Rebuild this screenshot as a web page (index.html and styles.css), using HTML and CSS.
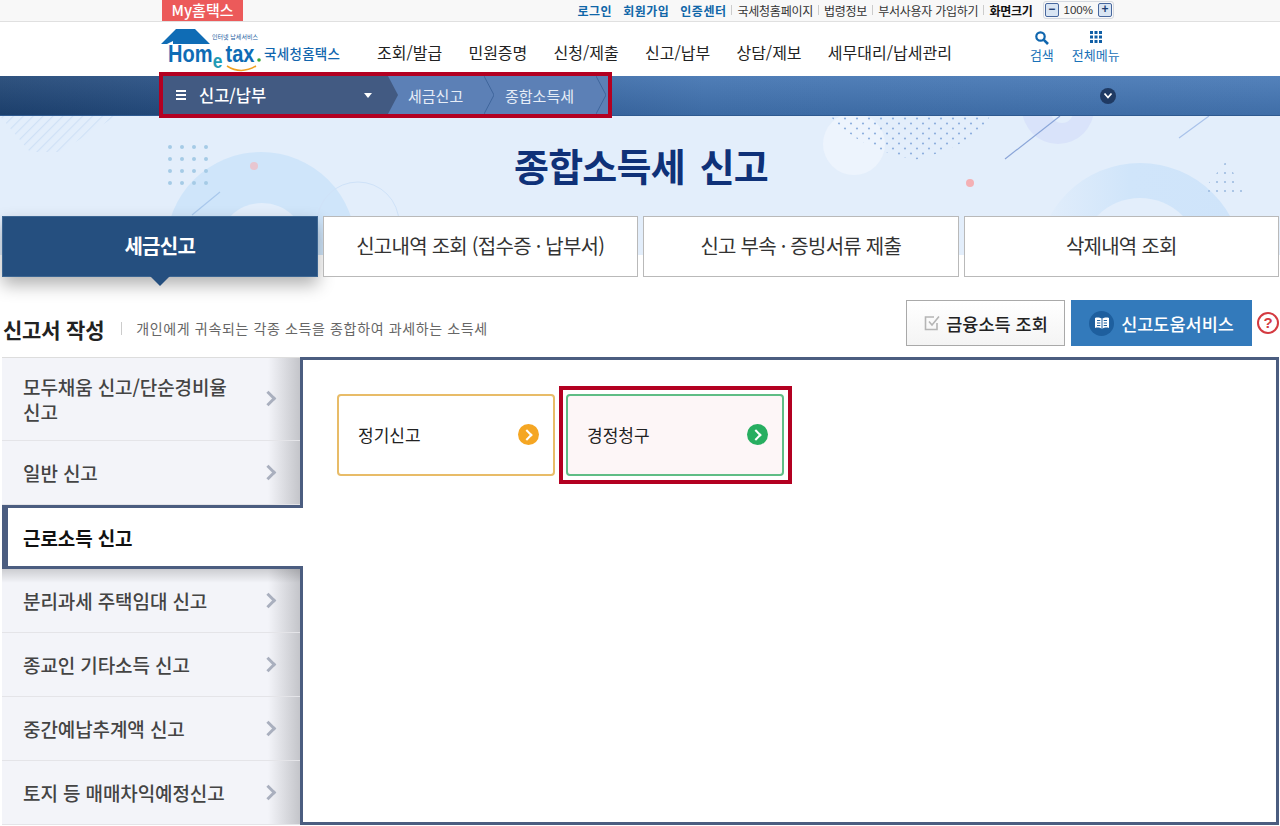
FILE: index.html
```html
<!DOCTYPE html>
<html lang="ko">
<head>
    <meta charset="UTF-8">
    <title>종합소득세 신고</title>
    <link rel="stylesheet" href="styles.css">
</head>
<body>
    <!-- top utility bar -->
    <div class="topbar">
        <a class="my-tab">My홈택스</a>
        <div class="top-links">
            <a class="strong">로그인</a>
            <a class="strong">회원가입</a>
            <a class="strong">인증센터</a>
            <i class="sep"></i>
            <a>국세청홈페이지</a>
            <i class="sep"></i>
            <a>법령정보</a>
            <i class="sep"></i>
            <a>부서사용자 가입하기</a>
            <i class="sep"></i>
            <a class="dark">화면크기</a>
            <div class="zoom-ctl">
                <span class="zoom-btn">−</span>
                <span class="zoom-val">100%</span>
                <span class="zoom-btn">+</span>
            </div>
        </div>
    </div>

    <!-- logo and main menu -->
    <header class="header">
        <svg class="logo" viewBox="160 24 182 50" width="182" height="50">
            <path d="M161 44 L176 29 H195 L210 44 H173 V41 L167 44 Z" fill="#0f6cb5"/>
            <text x="212" y="39.4" font-size="6" fill="#1b5ea0" font-family="Noto Sans CJK KR" textLength="46">인터넷 납세서비스</text>
            <text transform="translate(168 62) scale(.87 1)" font-size="23" font-weight="700" fill="#0f6cb5" font-family="Liberation Sans">Hom<tspan font-size="20" fill="#1f9bb5" dx="0.5" dy="6">e</tspan><tspan dx="3.4" dy="-6">tax</tspan></text>
            <circle cx="259" cy="60" r="1.8" fill="#3aa63a"/>
            <path d="M227 66 Q241 75 256 66" fill="none" stroke="#f0a020" stroke-width="1.5"/>
            <text x="264" y="59" font-size="13.5" font-weight="500" fill="#1266ae" font-family="Noto Sans CJK KR" textLength="76">국세청홈택스</text>
        </svg>
        <nav class="gnb">
            <a>조회/발급</a>
            <a>민원증명</a>
            <a>신청/제출</a>
            <a>신고/납부</a>
            <a>상담/제보</a>
            <a>세무대리/납세관리</a>
        </nav>
        <div class="head-tools">
            <a class="tool">
                <svg width="16" height="16" viewBox="0 0 16 16"><circle cx="6.5" cy="6.5" r="4.2" fill="none" stroke="#0f66ae" stroke-width="2.2"/><path d="M9.8 9.8 L14 14" stroke="#0f66ae" stroke-width="2.6"/></svg>
                <span>검색</span>
            </a>
            <a class="tool">
                <svg width="16" height="16" viewBox="0 0 16 16" fill="#0f5ea5"><rect x="2" y="1" width="3" height="3"/><rect x="6.5" y="1" width="3" height="3"/><rect x="11" y="1" width="3" height="3"/><rect x="2" y="5.5" width="3" height="3"/><rect x="6.5" y="5.5" width="3" height="3"/><rect x="11" y="5.5" width="3" height="3"/><rect x="2" y="10" width="3" height="3"/><rect x="6.5" y="10" width="3" height="3"/><rect x="11" y="10" width="3" height="3"/></svg>
                <span>전체메뉴</span>
            </a>
        </div>
    </header>

    <!-- breadcrumb bar -->
    <div class="crumbbar">
        <div class="crumbs">
            <div class="crumb-home">
                <span class="burger"><i></i><i></i><i></i></span>
                <span class="crumb-title">신고/납부</span>
                <span class="caret"></span>
            </div>
            <div class="crumb crumb-first">세금신고<svg class="chev" viewBox="0 0 10 38"><polyline points="0,0 10,19 0,38"/></svg></div>
            <div class="crumb">종합소득세<svg class="chev" viewBox="0 0 10 38"><polyline points="0,0 10,19 0,38"/></svg></div>
        </div>
        <span class="bar-toggle">
            <svg width="10" height="8" viewBox="0 0 10 8"><polyline points="1.5,1.5 5,5.5 8.5,1.5" fill="none" stroke="#fff" stroke-width="1.8"/></svg>
        </span>
    </div>

    <!-- hero with title and tabs -->
    <div class="visual">
        <svg class="visual-bg" viewBox="0 116 1280 139" width="1280" height="139">
            <defs>
                <pattern id="stripe" width="7" height="7" patternUnits="userSpaceOnUse" patternTransform="rotate(45)">
                    <rect width="1.2" height="7" fill="#cfe1f6"/>
                </pattern>
                <pattern id="dotgrid" width="12" height="10" patternUnits="userSpaceOnUse" x="830" y="116">
                    <circle cx="3" cy="2.5" r="1.1" fill="#8fb0de"/>
                    <circle cx="9" cy="7.5" r="1.1" fill="#8fb0de"/>
                </pattern>
                <pattern id="dotbig" width="12" height="12" patternUnits="userSpaceOnUse" x="164" y="141">
                    <circle cx="6" cy="6" r="2" fill="#a5cbe6"/>
                </pattern>
                <pattern id="dotsmall" width="8" height="9" patternUnits="userSpaceOnUse" x="1197" y="160">
                    <circle cx="4" cy="4" r="1.1" fill="#9dbbe0"/>
                </pattern>
                <linearGradient id="arcfade" x1="0" x2="1" y1="0" y2="0">
                    <stop offset="0" stop-color="#e3eefb"/>
                    <stop offset=".45" stop-color="#d0e5fa"/>
                    <stop offset="1" stop-color="#cfe4fa"/>
                </linearGradient>
            </defs>
            <path d="M0 116 H116 L60 152 H30 Z" fill="url(#stripe)"/>
            <circle cx="261" cy="247" r="95" fill="#cfe5fa"/>
            <circle cx="262" cy="247" r="44" fill="#e3eefb"/>
            <circle cx="358" cy="223" r="41" fill="none" stroke="#cfe2f8" stroke-width="1"/>
            <rect x="164" y="141" width="48" height="48" fill="url(#dotbig)"/>
            <circle cx="254" cy="166" r="4" fill="#e8c6d0"/>
            <line x1="192" y1="215" x2="220" y2="192" stroke="#a9c8ec" stroke-width="1.2"/>
            <circle cx="854" cy="144" r="31" fill="#edf4fd"/>
            <path d="M830 116 H990 Q975 145 915 160 Q860 150 830 116 Z" fill="url(#dotgrid)"/>
            <circle cx="1058" cy="108" r="36" fill="#d9e3fa"/>
            <circle cx="1062" cy="112" r="11" fill="#e3eefb"/>
            <line x1="1005" y1="159" x2="1060" y2="116" stroke="#8aa5d8" stroke-width="1.2"/>
            <line x1="1179" y1="138" x2="1209" y2="116" stroke="#a9c2ea" stroke-width="1.2"/>
            <circle cx="970" cy="183" r="4" fill="#f4b0b4"/>
            <circle cx="1140" cy="266" r="103" fill="url(#arcfade)"/>
            <circle cx="1140" cy="258" r="60" fill="#e3eefb"/>
            <path d="M1227 160 L1197 198 H1246 Z" fill="url(#dotsmall)"/>
        </svg>
        <h1 class="page-title">종합소득세 신고</h1>
        <div class="tabs">
            <a class="tab active">세금신고</a>
            <a class="tab">신고내역 조회 (접수증 · 납부서)</a>
            <a class="tab">신고 부속 · 증빙서류 제출</a>
            <a class="tab">삭제내역 조회</a>
        </div>
    </div>

    <!-- section heading -->
    <div class="sec-head">
        <h2>신고서 작성</h2>
        <span class="sec-desc">개인에게 귀속되는 각종 소득을 종합하여 과세하는 소득세</span>
        <div class="sec-btns">
            <a class="btn btn-line">
                <svg width="18" height="18" viewBox="0 0 18 18"><path d="M14 9 V15.5 H2.5 V3 H11" fill="none" stroke="#b5b5b5" stroke-width="1.6"/><path d="M6 7.5 L9 11 L16 2.5" fill="none" stroke="#b5b5b5" stroke-width="1.6"/></svg>
                금융소득 조회
            </a>
            <a class="btn btn-blue">
                <span class="book">
                    <svg width="16" height="14" viewBox="0 0 16 14"><path d="M8 3 C6 1.5 3 1.2 1 2 V12 C3 11.2 6 11.5 8 13 C10 11.5 13 11.2 15 12 V2 C13 1.2 10 1.5 8 3 Z" fill="#fff"/><path d="M8 3 V13 M3 4.5 H6.3 M3 7 H6.3 M3 9.5 H6.3 M9.7 4.5 H13 M9.7 7 H13 M9.7 9.5 H13" stroke="#1e5f9e" stroke-width="1" fill="none"/></svg>
                </span>
                신고도움서비스
            </a>
            <a class="help">?</a>
        </div>
    </div>

    <!-- side menu and cards -->
    <div class="work">
        <ul class="side">
            <li class="side-item tall"><span>모두채움 신고/단순경비율<br>신고</span></li>
            <li class="side-item"><span>일반 신고</span></li>
            <li class="side-item on"><span>근로소득 신고</span></li>
            <li class="side-item after-on"><span>분리과세 주택임대 신고</span></li>
            <li class="side-item"><span>종교인 기타소득 신고</span></li>
            <li class="side-item"><span>중간예납추계액 신고</span></li>
            <li class="side-item"><span>토지 등 매매차익예정신고</span></li>
        </ul>
        <div class="panel">
            <a class="card card-orange">정기신고<span class="go"></span></a>
            <a class="card card-green">경정청구<span class="go"></span></a>
        </div>
    </div>
</body>
</html>
```

FILE: styles.css
```css
* {
    box-sizing: border-box;
}
html, body {
    height: 826px;
    overflow: hidden;
}
body {
    margin: 0;
    background: #fff;
    color: #222;
    font-family: "Noto Sans CJK KR", "Noto Sans", sans-serif;
}
a {
    color: inherit;
    text-decoration: none;
}

/* top bar */
.topbar {
    display: flex;
    justify-content: space-between;
    height: 22px;
    padding: 0 166px 0 162px;
    background: #f8f8f8;
    border-bottom: 1px solid #e0e0e0;
}
.my-tab {
    width: 81px;
    height: 21px;
    background: #ec5a5a;
    color: #fff;
    font-size: 15px;
    font-weight: 500;
    line-height: 19px;
    text-align: center;
}
.top-links {
    display: flex;
    align-items: center;
    height: 20px;
    font-size: 12px;
    color: #333;
    letter-spacing: -0.25px;
}
.top-links a {
    margin-right: 11px;
    white-space: pre;
}
.top-links .strong {
    color: #0f66a8;
    font-weight: 700;
    font-size: 12px;
    letter-spacing: 0.5px;
}
.top-links .dark {
    color: #111;
    font-weight: 700;
    margin-right: 10px;
}
.sep {
    width: 1px;
    height: 10px;
    margin-right: 5px;
    margin-left: -6px;
    background: #ccc;
}
.zoom-ctl {
    display: flex;
    align-items: center;
    gap: 5px;
    height: 18px;
    padding: 0 1px;
    border: 1px solid #d5d9e0;
    border-radius: 3px;
    font-size: 11px;
}
.zoom-val {
    font-family: "Liberation Sans", sans-serif;
    font-size: 11.5px;
    letter-spacing: 0;
}
.zoom-btn {
    width: 14px;
    height: 14px;
    border: 1px solid #47679e;
    border-radius: 2px;
    background: #d9e5f3;
    color: #1d3f73;
    font: 700 12px/11px "Liberation Sans", sans-serif;
    text-align: center;
}

/* header */
.header {
    display: flex;
    align-items: flex-start;
    height: 54px;
    padding-left: 160px;
    background: #fff;
}
.logo {
    flex: none;
    margin-top: 2px;
}
.gnb {
    display: flex;
    gap: 26.25px;
    margin-left: 35px;
    font-size: 16px;
    line-height: 60px;
    color: #222;
    white-space: nowrap;
}
.head-tools {
    display: flex;
    gap: 18px;
    margin-left: 78px;
    padding-top: 8px;
}
.tool {
    display: flex;
    flex-direction: column;
    align-items: center;
    color: #1a72b8;
    font-size: 13px;
    line-height: 18px;
}

/* breadcrumb bar */
.crumbbar {
    position: relative;
    z-index: 2;
    display: flex;
    height: 40px;
    padding-left: 163px;
    background:
        linear-gradient(180deg, rgba(255, 255, 255, 0.08), rgba(0, 0, 0, 0.08)),
        linear-gradient(90deg, #1e4474 0, #2f5a94 30%, #4173b1 55%, #4577b5 100%);
    border-bottom: 1px solid #2f5a90;
}
.crumbs {
    display: flex;
    width: 445px;
    height: 38px;
    background: #5c80b6;
    outline: 4px solid #b30021;
}
.crumb-home {
    display: flex;
    align-items: center;
    width: 235px;
    padding: 0 26px 0 13px;
    background: #425a82;
    color: #fff;
    clip-path: polygon(0 0, calc(100% - 10px) 0, 100% 50%, calc(100% - 10px) 100%, 0 100%);
}
.burger {
    display: flex;
    flex-direction: column;
    gap: 2px;
    width: 10px;
    margin-right: 13px;
}
.burger i {
    height: 2px;
    background: #fff;
}
.crumb-title {
    flex: 1;
    font-size: 16.5px;
    font-weight: 500;
}
.caret {
    width: 0;
    height: 0;
    border: 4px solid transparent;
    border-top: 5px solid #fff;
    border-bottom: 0;
}
.crumb {
    position: relative;
    display: flex;
    align-items: center;
    width: 112px;
    padding-left: 11px;
    color: #e6edf7;
    font-size: 15px;
    white-space: nowrap;
}
.crumb-first {
    padding-left: 10px;
    width: 96px;
}
.chev {
    position: absolute;
    top: 0;
    right: 0;
    width: 10px;
    height: 38px;
    fill: none;
    stroke: #3f659c;
    stroke-width: 1;
}
.bar-toggle {
    position: absolute;
    left: 1100px;
    top: 12px;
    display: flex;
    align-items: center;
    justify-content: center;
    width: 16px;
    height: 16px;
    border-radius: 50%;
    background: #1f3a63;
}

/* hero */
.visual {
    position: relative;
    height: 161px;
    background: linear-gradient(180deg, #e3eefb 139px, #fff 139px);
}
.visual-bg {
    position: absolute;
    top: 0;
    left: 0;
}
.page-title {
    position: relative;
    height: 100px;
    margin: 0;
    padding-left: 2px;
    color: #0f3178;
    font-size: 38px;
    font-weight: 700;
    line-height: 98px;
    letter-spacing: -0.8px;
    word-spacing: 5px;
    text-align: center;
}
.tabs {
    position: relative;
    display: grid;
    grid-template-columns: repeat(4, 1fr);
    gap: 5px;
    padding: 0 1px 0 2px;
}
.tab {
    position: relative;
    height: 61px;
    background: #fff;
    border: 1px solid #b9b9b9;
    color: #333;
    font-size: 20px;
    letter-spacing: -0.75px;
    line-height: 58px;
    text-align: center;
}
.tab.active {
    background: #254f7f;
    border-color: #3d6692;
    color: #fff;
    font-weight: 700;
    box-shadow: 0 8px 16px rgba(0, 0, 0, 0.3);
}
.tab.active::after {
    content: '';
    position: absolute;
    left: 50%;
    bottom: -10px;
    margin-left: -10px;
    border-left: 10px solid transparent;
    border-right: 10px solid transparent;
    border-top: 10px solid #254f7f;
}

/* section heading */
.sec-head {
    display: flex;
    align-items: flex-start;
    height: 46px;
    margin: 23px 0 11px;
    padding: 0 1px 0 3px;
}
.sec-head h2 {
    margin: 0;
    font-size: 21px;
    font-weight: 700;
    line-height: 58px;
    color: #222;
    letter-spacing: -0.2px;
}
.sec-desc {
    position: relative;
    margin-left: 32px;
    color: #666;
    font-size: 14px;
    line-height: 57px;
    letter-spacing: 0.63px;
}
.sec-desc::before {
    content: '';
    position: absolute;
    left: -15px;
    top: 22px;
    width: 1px;
    height: 13px;
    background: #ccc;
}
.sec-btns {
    display: flex;
    margin-left: auto;
}
.btn {
    display: flex;
    align-items: center;
    justify-content: center;
    height: 46px;
    font-size: 17.5px;
    font-weight: 500;
}
.btn-line {
    gap: 5px;
    width: 159px;
    margin-right: 6px;
    background: linear-gradient(180deg, #fff, #f4f4f4);
    border: 1px solid #a9a9a9;
    color: #222;
}
.btn-blue {
    gap: 7px;
    width: 181px;
    background: #337abb;
    color: #fff;
}
.book {
    display: flex;
    align-items: center;
    justify-content: center;
    width: 25px;
    height: 25px;
    border-radius: 50%;
    background: #1e5f9e;
}
.help {
    width: 22px;
    height: 22px;
    margin: 12px 0 0 5px;
    border: 2px solid #d43a40;
    border-radius: 50%;
    color: #d43a40;
    font: 700 15px/18px "Liberation Sans", sans-serif;
    text-align: center;
}

/* side menu and panel */
.work {
    display: flex;
    padding: 0 0 0 2px;
    height: 468px;
}
.side {
    position: relative;
    z-index: 1;
    flex: none;
    width: 298px;
    margin: 0;
    padding: 0;
    list-style: none;
}
.side-item {
    display: flex;
    align-items: center;
    position: relative;
    height: 64px;
    padding-left: 21px;
    border-bottom: 1px solid #e4e4e8;
    background: linear-gradient(90deg, #f3f4f9 calc(100% - 32px), #c4c5ca 100%);
    color: #444;
    font-size: 19px;
    font-weight: 500;
    line-height: 25px;
    letter-spacing: -0.1px;
}
.side-item::after {
    content: '';
    position: absolute;
    right: 26px;
    top: 50%;
    width: 8px;
    height: 8px;
    margin-top: -6px;
    border-top: 3px solid #a9afbe;
    border-right: 3px solid #a9afbe;
    transform: rotate(45deg);
}
.side-item.tall {
    height: 84px;
    border-top: 1px solid #ddd;
}
.side-item.on {
    width: 301px;
    padding-left: 15px;
    border: 3px solid #4b5d80;
    border-left-width: 6px;
    border-right: 0;
    background: #fff;
    color: #111;
    font-weight: 700;
}
.side-item.on::after {
    display: none;
}
.side-item.after-on {
    background:
        linear-gradient(180deg, rgba(0, 0, 0, 0.16), rgba(0, 0, 0, 0) 14px),
        linear-gradient(90deg, #f3f4f9 calc(100% - 32px), #c4c5ca 100%);
}
.panel {
    display: flex;
    align-items: flex-start;
    flex: 1;
    gap: 11px;
    margin-right: 1px;
    padding: 34px 0 0 34px;
    background: #fff;
    border: 3px solid #4b5d80;
}
.card {
    position: relative;
    display: flex;
    align-items: center;
    justify-content: space-between;
    width: 218px;
    height: 82px;
    padding: 0 14px 2px 19px;
    border-radius: 4px;
    font-size: 17px;
    color: #222;
}
.card-orange {
    border: 2px solid #e8bc68;
}
.card-green {
    border: 2px solid #5fbd85;
    background: #fdf6f7;
}
.card-green::after {
    content: '';
    position: absolute;
    inset: -10px -10px -10px -9px;
    border: 4px solid #b30021;
}
.go {
    position: relative;
    width: 21px;
    height: 21px;
    border-radius: 50%;
    background: #f5a623;
}
.card-green .go {
    background: #27ae60;
}
.go::after {
    content: '';
    position: absolute;
    left: 5px;
    top: 7px;
    width: 6px;
    height: 6px;
    border-top: 2px solid #fff;
    border-right: 2px solid #fff;
    transform: rotate(45deg);
}
```
